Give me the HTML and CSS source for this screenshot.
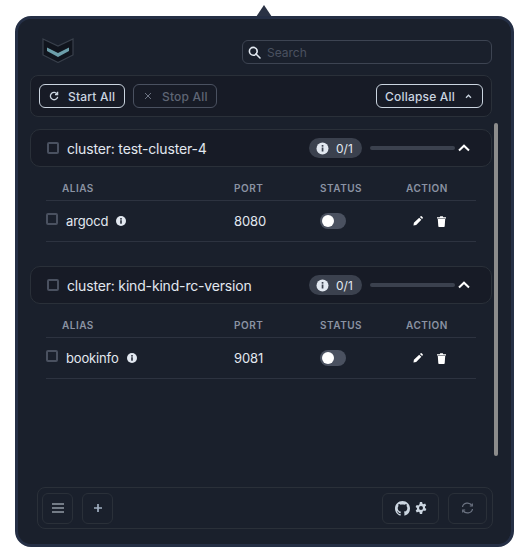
FILE: index.html
```html
<!DOCTYPE html>
<html lang="en">
<head>
<meta charset="utf-8">
<title>Port forward</title>
<link rel="stylesheet" href="styles.css">
</head>
<body>
<div class="arrow"></div>
<main class="panel">
  <header class="top">
    <svg class="logo" width="32" height="25" viewBox="0 0 32 25"><path d="M1 1 L16 8 L31 1 V17 L16 24.500 L1 17 Z" fill="#10141d" stroke="#39404c" stroke-width="1.200"/><path d="M5 9.500 L16 15 L27 9.500 V13 L16 19 L5 13 Z" fill="#6c9eaa"/></svg>
    <label class="search">
      <svg width="13" height="13" viewBox="0 0 13 13" fill="none" stroke="#e2e8f0" stroke-width="1.600"><circle cx="5.300" cy="5.300" r="3.900"/><path d="M8.300 8.300 L12 12" stroke-linecap="round"/></svg>
      <span>Search</span>
    </label>
  </header>
  <section class="toolbar">
    <button class="btn active">
      <svg width="10" height="10" viewBox="0 0 10 10" fill="none" stroke="#cbd5e0" stroke-width="1.300"><path d="M8.300 3.200 A3.700 3.700 0 1 0 8.700 5.800"/><path d="M8.600 0.800 V3.500 H6" /></svg>
      <span>Start All</span>
    </button>
    <button class="btn off">
      <svg width="8" height="8" viewBox="0 0 8 8" stroke="#6c7382" stroke-width="1"><path d="M1 1 L7 7 M7 1 L1 7"/></svg>
      <span>Stop All</span>
    </button>
    <button class="btn collapse">
      <span>Collapse All</span>
      <svg width="7" height="5" viewBox="0 0 8 6" fill="none" stroke="#cbd5e0" stroke-width="1.500"><path d="M1 4.500 L4 1.500 L7 4.500"/></svg>
    </button>
  </section>
  <div class="list">
    <section class="cluster">
      <div class="cluster-head">
        <i class="check"></i>
        <span class="cluster-name">cluster: test-cluster-4</span>
        <span class="pill"><svg class="info" width="13" height="13" viewBox="0 0 13 13"><circle cx="6.500" cy="6.500" r="6" fill="#e2e8f0"/><rect x="5.700" y="5.500" width="1.700" height="4" fill="#3b414e"/><rect x="5.700" y="3" width="1.700" height="1.700" fill="#3b414e"/></svg>0/1</span>
        <span class="bar"></span>
        <svg class="chev" width="12" height="8" viewBox="0 0 12 8" fill="none" stroke="#fff" stroke-width="2"><path d="M1 6.500 L6 1.700 L11 6.500"/></svg>
      </div>
      <div class="table">
        <div class="row thead"><span>ALIAS</span><span>PORT</span><span>STATUS</span><span>ACTION</span></div>
        <div class="row tbody">
          <span class="alias"><i class="check small"></i>argocd<svg width="10" height="10" viewBox="0 0 13 13"><circle cx="6.500" cy="6.500" r="6.500" fill="#e2e8f0"/><rect x="5.500" y="5.500" width="2" height="4.500" fill="#1a202c"/><rect x="5.500" y="2.700" width="2" height="2" fill="#1a202c"/></svg></span>
          <span class="port">8080</span>
          <span class="status"><i class="toggle"></i></span>
          <span class="actions">
            <svg width="10" height="10" viewBox="0 0 11 11" fill="#fff"><path d="M0.500 10.500 L1 7.500 L6.800 1.800 L9.200 4.200 L3.500 10 Z M7.600 1 L8.500 0.200 Q9 0 9.500 0.300 L10.700 1.500 Q11 2 10.700 2.500 L10 3.400 Z"/></svg>
            <svg width="9" height="11" viewBox="0 0 9 11" fill="#fff"><path d="M0 1.200 H2.700 L3.200 0.300 H5.800 L6.300 1.200 H9 V2.400 H0 Z M0.800 3.100 H8.200 L7.700 10.200 Q7.600 11 7 11 H2 Q1.400 11 1.300 10.200 Z"/></svg>
          </span>
        </div>
      </div>
    </section>
    <section class="cluster">
      <div class="cluster-head">
        <i class="check"></i>
        <span class="cluster-name">cluster: kind-kind-rc-version</span>
        <span class="pill"><svg class="info" width="13" height="13" viewBox="0 0 13 13"><circle cx="6.500" cy="6.500" r="6" fill="#e2e8f0"/><rect x="5.700" y="5.500" width="1.700" height="4" fill="#3b414e"/><rect x="5.700" y="3" width="1.700" height="1.700" fill="#3b414e"/></svg>0/1</span>
        <span class="bar"></span>
        <svg class="chev" width="12" height="8" viewBox="0 0 12 8" fill="none" stroke="#fff" stroke-width="2"><path d="M1 6.500 L6 1.700 L11 6.500"/></svg>
      </div>
      <div class="table">
        <div class="row thead"><span>ALIAS</span><span>PORT</span><span>STATUS</span><span>ACTION</span></div>
        <div class="row tbody">
          <span class="alias"><i class="check small"></i>bookinfo<svg width="10" height="10" viewBox="0 0 13 13"><circle cx="6.500" cy="6.500" r="6.500" fill="#e2e8f0"/><rect x="5.500" y="5.500" width="2" height="4.500" fill="#1a202c"/><rect x="5.500" y="2.700" width="2" height="2" fill="#1a202c"/></svg></span>
          <span class="port">9081</span>
          <span class="status"><i class="toggle"></i></span>
          <span class="actions">
            <svg width="10" height="10" viewBox="0 0 11 11" fill="#fff"><path d="M0.500 10.500 L1 7.500 L6.800 1.800 L9.200 4.200 L3.500 10 Z M7.600 1 L8.500 0.200 Q9 0 9.500 0.300 L10.700 1.500 Q11 2 10.700 2.500 L10 3.400 Z"/></svg>
            <svg width="9" height="11" viewBox="0 0 9 11" fill="#fff"><path d="M0 1.200 H2.700 L3.200 0.300 H5.800 L6.300 1.200 H9 V2.400 H0 Z M0.800 3.100 H8.200 L7.700 10.200 Q7.600 11 7 11 H2 Q1.400 11 1.300 10.200 Z"/></svg>
          </span>
        </div>
      </div>
    </section>
    <div class="scrollbar"></div>
  </div>
  <footer class="foot">
    <button class="icon-btn"><svg width="12" height="10" viewBox="0 0 12 10" stroke="#cbd5e0" stroke-width="1.200"><path d="M0 1 H12 M0 5 H12 M0 9 H12"/></svg></button>
    <button class="icon-btn"><svg width="8" height="8" viewBox="0 0 8 8" stroke="#a0aec0" stroke-width="1.700"><path d="M0 4 H8 M4 0 V8"/></svg></button>
    <span class="spacer"></span>
    <button class="icon-btn github">
      <svg width="15" height="15" viewBox="0 0 16 16" fill="#cbd5e0"><path d="M8 0C3.580 0 0 3.580 0 8c0 3.540 2.290 6.530 5.470 7.590.4.070.55-.17.55-.38 0-.19-.01-.82-.01-1.490-2.010.37-2.530-.49-2.690-.94-.09-.23-.48-.94-.82-1.130-.28-.15-.68-.52-.01-.53.63-.01 1.080.58 1.230.82.72 1.210 1.870.87 2.330.66.07-.52.28-.87.51-1.070-1.780-.2-3.640-.89-3.640-3.950 0-.87.31-1.590.82-2.150-.08-.2-.36-1.020.08-2.120 0 0 .67-.21 2.200.82.64-.18 1.320-.27 2-.27.68 0 1.360.09 2 .27 1.530-1.040 2.200-.82 2.200-.82.44 1.100.16 1.920.08 2.120.51.56.82 1.270.82 2.150 0 3.070-1.870 3.750-3.650 3.950.29.25.54.73.54 1.480 0 1.070-.01 1.930-.01 2.200 0 .21.15.46.55.38A8.013 8.013 0 0016 8c0-4.420-3.580-8-8-8z"/></svg>
      <svg width="12" height="12" viewBox="0 0 12 12"><path fill="#cbd5e0" fill-rule="evenodd" d="M4.900 0 H7.100 L7.500 1.700 L8.500 2.200 L10.100 1.500 L11.200 3.400 L10 4.600 V5.900 L11.400 7 L10.300 9 L8.600 8.500 L7.500 9.700 L7.100 12 H4.900 L4.500 10.300 L3.400 9.700 L1.800 10.400 L.7 8.500 L2 7.300 V6 L.6 4.900 L1.700 3 L3.400 3.500 L4.500 2.300 Z M6 4 A2 2 0 1 0 6 8 A2 2 0 1 0 6 4 Z"/></svg>
    </button>
    <button class="icon-btn sync"><svg width="13" height="12" viewBox="0 0 13 12" fill="none" stroke="#6c7382" stroke-width="1.200"><path d="M1.500 5 A5 4.600 0 0 1 10.800 3.400"/><path d="M11.500 7 A5 4.600 0 0 1 2.200 8.600"/><path d="M11.300 1.500 V4 H8.800"/><path d="M1.700 10.500 V8 H4.200"/></svg></button>
  </footer>
</main>
</body>
</html>
```
FILE: styles.css
```css
* { box-sizing: border-box; }
html, body { margin: 0; padding: 0; background: #fff; }
body {
  width: 528px;
  height: 553px;
  padding: 16px 14px 0 15px;
  font-family: Inter, "Liberation Sans", sans-serif;
  overflow: hidden;
}
button { font: inherit; background: none; padding: 0; margin: 0; }
.arrow {
  position: absolute;
  left: 256px;
  top: 5px;
  width: 0;
  height: 0;
  border-left: 8px solid transparent;
  border-right: 8px solid transparent;
  border-bottom: 12px solid #2a3244;
}
.panel {
  position: relative;
  width: 499px;
  height: 531px;
  background: #1a202c;
  border: 3px solid #252f45;
  border-radius: 16px;
  display: flex;
  flex-direction: column;
  padding: 0 19px 0 12px;
}
.top {
  height: 56px;
  display: flex;
  justify-content: space-between;
  align-items: flex-start;
  padding-left: 12px;
}
.logo { margin-top: 19px; flex: none; }
.search {
  margin-top: 21px;
  width: 250px;
  height: 24px;
  border: 1px solid #3d4452;
  border-radius: 6px;
  display: flex;
  align-items: center;
  gap: 6px;
  padding-left: 5px;
  color: #4a5160;
  font-size: 12px;
}
.toolbar {
  height: 42px;
  background: #171b26;
  border: 1px solid #2a3039;
  border-radius: 8px;
  display: flex;
  align-items: center;
  gap: 8px;
  padding: 0 8px;
  flex: none;
}
.btn {
  height: 24px;
  border-radius: 6px;
  display: flex;
  align-items: center;
  font-size: 12px;
  font-weight: 500;
  letter-spacing: 0.2px;
}
.active {
  width: 86px;
  border: 1px solid #cbd5e0;
  color: #cbd5e0;
  gap: 9px;
  padding-left: 9px;
}
.off {
  width: 84px;
  border: 1px solid #4a5160;
  color: #5f6675;
  gap: 10px;
  padding-left: 10px;
}
.collapse {
  margin-left: auto;
  width: 107px;
  border: 1px solid #cbd5e0;
  color: #cbd5e0;
  gap: 10px;
  padding-left: 8px;
}
.list { position: relative; flex: 1; padding-top: 12px; }
.scrollbar {
  position: absolute;
  right: -6px;
  top: 6px;
  width: 4px;
  height: 333px;
  background: #8c8c8c;
  border-radius: 2px;
}
.cluster { margin-bottom: 24px; }
.cluster-head {
  height: 38px;
  background: #171b26;
  border: 1px solid #2a3039;
  border-radius: 10px;
  display: flex;
  align-items: center;
  padding-left: 16px;
}
.check {
  display: block;
  width: 12px;
  height: 12px;
  border: 2px solid #4a5160;
  border-radius: 2px;
  flex: none;
}
.cluster-name {
  margin-left: 8px;
  font-size: 14px;
  letter-spacing: -0.17px;
  color: #e2e8f0;
  flex: 1;
}
.pill {
  width: 53px;
  height: 20px;
  background: #3b414e;
  border-radius: 10px;
  display: flex;
  align-items: center;
  gap: 7px;
  padding-left: 7px;
  font-size: 12px;
  color: #e2e8f0;
}
.bar {
  margin-left: 8px;
  width: 85px;
  height: 4px;
  background: #3b414e;
  border-radius: 2px;
}
.chev { margin: 0 21px 0 3px; }
.table { margin: 0 16px 0 16px; }
.row {
  display: grid;
  grid-template-columns: 188px 86px 86px 1fr;
  align-items: center;
  border-bottom: 1px solid #2d3340;
}
.thead {
  height: 34px;
  padding-top: 8px;
  font-size: 10px;
  font-weight: 600;
  letter-spacing: 0.5px;
  color: #8b93a3;
}
.thead span:first-child { padding-left: 16px; }
.tbody { height: 41px; font-size: 13px; color: #e2e8f0; }
.alias { display: flex; align-items: center; gap: 8px; letter-spacing: -0.15px; }
.small { margin-top: -4px; }
.alias svg { flex: none; }
.port { font-size: 13px; letter-spacing: -0.1px; }
.toggle {
  display: block;
  position: relative;
  width: 26px;
  height: 16px;
  background: #4a5160;
  border-radius: 8px;
}
.toggle::before {
  content: "";
  position: absolute;
  left: 2px;
  top: 2px;
  width: 12px;
  height: 12px;
  background: #fff;
  border-radius: 50%;
}
.actions { display: flex; align-items: center; gap: 14px; padding-left: 7px; }
.foot {
  position: absolute;
  left: 19px;
  right: 18px;
  bottom: 15px;
  height: 42px;
  border: 1px solid #2a3039;
  border-radius: 8px;
  display: flex;
  align-items: center;
  gap: 9px;
  padding: 0 5px 0 4px;
}
.icon-btn {
  width: 31px;
  height: 31px;
  border: 1px solid #2a3039;
  background: #1a202c;
  border-radius: 6px;
  display: flex;
  align-items: center;
  justify-content: center;
}
.spacer { flex: 1; }
.github { width: 57px; gap: 5px; }
.sync { width: 39px; height: 31px; }
```
